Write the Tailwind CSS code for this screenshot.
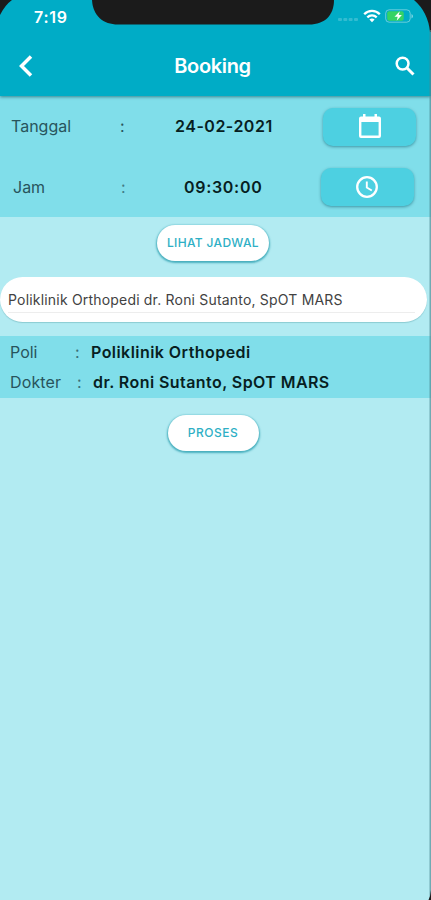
<!DOCTYPE html>
<html lang="id">
<head>
<meta charset="utf-8">
<title>Booking</title>
<script src="https://cdn.jsdelivr.net/npm/@tailwindcss/browser@4"></script>
</head>
<body class="bg-[#1b1b1b]">
<main class="relative w-[431px] h-[900px] overflow-hidden bg-[#b2ebf2] font-['Inter',sans-serif] whitespace-nowrap text-[#28545c]">
  <header class="relative z-10 h-24 bg-[#00acc6] text-white shadow-[0_1px_3px_rgba(0,60,70,0.55)]">
    <div class="flex h-8 items-center pl-[34px] pr-[17px]">
      <span class="w-[34px] text-[16px] font-semibold leading-8 pt-px tracking-[0.7px]">7:19</span>
      <div class="ml-auto flex items-center">
        <svg class="mr-[5px] mt-2" width="20" height="4" viewBox="0 0 20 4" fill="#fff" fill-opacity=".2"><rect width="4" height="3" rx="1"/><rect x="5.3" width="4" height="3" rx="1"/><rect x="10.6" width="4" height="3" rx="1"/><rect x="16" width="4" height="3" rx="1"/></svg>
        <svg class="mr-1" width="18" height="14" viewBox="0 0 18 14" fill="none" stroke="#fff" stroke-width="2.3"><path d="M1.2 5.2C5.6.8 12.4.8 16.8 5.2M4.3 8.3c2.700-2.600 6.700-2.600 9.400 0"/><path d="M6.400 10.500c1.600-1.400 3.600-1.400 5.200 0L9 13.200z" fill="#fff" stroke="none"/></svg>
        <svg width="29" height="14" viewBox="0 0 29 14"><rect x=".7" y=".8" width="24.5" height="12.4" rx="3.5" fill="none" stroke="#fff" stroke-opacity=".4"/><rect x="2.2" y="2.3" width="16.5" height="9.4" rx="2" fill="#35d364"/><path d="M26.500 5v4.400c2-.8 2-3.600 0-4.400z" fill="#fff" fill-opacity=".5"/><path d="M14.800 2.200 9.500 7.800h3.200l-1 4 5.200-5.700h-3.200z" fill="#fff"/></svg>
      </div>
    </div>
    <div class="flex h-[68px] items-center justify-between pl-[18px] pr-[16px]">
      <svg width="16" height="22" viewBox="0 0 16 22" fill="none" stroke="#fff" stroke-width="3.500"><path d="M13 1.500 3.500 11 13 20.500"/></svg>
      <h1 class="mr-[4px] text-[20px] font-semibold tracking-[-0.350px]">Booking</h1>
      <svg width="20" height="20" viewBox="0 0 20 20" fill="none" stroke="#fff" stroke-width="2.500"><circle cx="7.600" cy="7.600" r="5.900"/><path d="m11.800 11.800 6.700 6.700" stroke-width="3"/></svg>
    </div>
  </header>

  <section class="h-[121px] bg-[#80deea] text-[16px]">
    <div class="flex h-[61px] items-center pl-[11px]">
      <span class="w-[109px] -mt-px">Tanggal</span>
      <span class="w-[55px] -mt-px">:</span>
      <b class="w-[148px] -mt-px font-semibold text-[#071e22] tracking-[0.500px]">24-02-2021</b>
      <button class="flex h-[38px] w-[93px] items-center justify-center rounded-[10px] bg-[#4dd0e1] shadow-[0_1px_3px_rgba(0,80,95,0.5)]">
        <svg class="-mt-px" width="24" height="26" viewBox="0 0 24 26"><path fill="#fff" fill-rule="evenodd" d="M5 1h2.500v2.500h9V1H19v2.500h2a2 2 0 0 1 2 2V23a2 2 0 0 1-2 2H3a2 2 0 0 1-2-2V5.500a2 2 0 0 1 2-2h2zM3.400 9v13.600h17.200V9z"/></svg>
      </button>
    </div>
    <div class="flex h-[60px] items-center pl-[13px]">
      <span class="w-[108px]">Jam</span>
      <span class="w-[63px] opacity-70">:</span>
      <b class="w-[137px] font-semibold text-[#071e22] tracking-[0.700px]">09:30:00</b>
      <button class="flex h-[38px] w-[93px] items-center justify-center rounded-[10px] bg-[#4dd0e1] shadow-[0_1px_3px_rgba(0,80,95,0.5)]">
        <svg class="-ml-px" width="24" height="24" viewBox="0 0 24 24" fill="none" stroke="#fff" stroke-width="2.300"><circle cx="12" cy="12" r="9.800"/><path d="M11.800 6.500v6l5 3" stroke-width="1.900"/></svg>
      </button>
    </div>
  </section>

  <div class="flex h-[60px] justify-center pr-[5px] pt-2">
    <button class="h-[36px] w-[112px] rounded-full bg-white text-[12px] font-medium tracking-[0.350px] text-[#2eafc5] shadow-[0_1px_2px_1px_rgba(0,135,155,0.6)]">LIHAT JADWAL</button>
  </div>

  <div class="h-[45px] w-[427px] rounded-full bg-white pl-2 pr-3 text-[14px] text-[#424242] shadow-[0_1px_1px_rgba(0,90,100,0.22)]">
    <div class="h-[36px] border-b border-[#ededed] pt-px leading-[43px] tracking-[0.190px]">Poliklinik Orthopedi dr. Roni Sutanto, SpOT MARS</div>
  </div>

  <section class="mt-[14px] h-[62px] bg-[#80deea] text-[16px]">
    <div class="flex h-[31px] items-center pl-[10px]">
      <span class="w-[65px]">Poli</span><span class="w-[16px] opacity-80">:</span><b class="font-semibold text-[#071e22] tracking-[0.450px]">Poliklinik Orthopedi</b>
    </div>
    <div class="flex h-[30px] items-center pl-[10px]">
      <span class="w-[67px] tracking-[0.150px]">Dokter</span><span class="w-[16px] opacity-80">:</span><b class="font-semibold text-[#071e22] tracking-[0.430px]">dr. Roni Sutanto, SpOT MARS</b>
    </div>
  </section>

  <div class="flex justify-center pr-[5px] pt-[17px]">
    <button class="h-[36px] w-[91px] rounded-full bg-white text-[12px] font-medium tracking-[0.500px] text-[#2eafc5] shadow-[0_1px_2px_1px_rgba(0,135,155,0.6)]">PROSES</button>
  </div>

  <svg class="pointer-events-none absolute inset-0 z-20" width="431" height="900" viewBox="0 0 431 900" fill="#1b1b1b">
    <path d="M92 0C93 16 103 24.500 118 24.500H309C325 24.500 334 15 334 0z"/>
    <path d="M0 0H12Q5 5 0 15zM414 0H431V32H430Q428 12 414 0z"/>
    <path d="M429.500 30H431V900H429.500z" fill="#4b8790" fill-opacity=".65"/>
    <path d="M431 890v10h-2.500q2-4 2.500-10z"/>
  </svg>
</main>
</body>
</html>
